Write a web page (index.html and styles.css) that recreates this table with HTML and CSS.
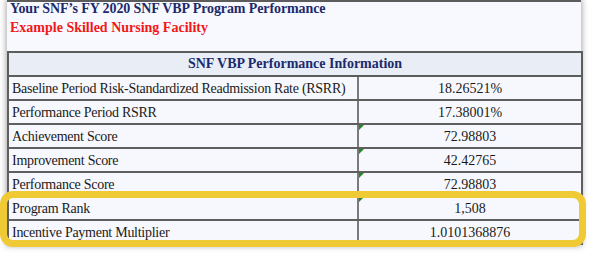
FILE: index.html
```html
<!DOCTYPE html>
<html>
<head>
<meta charset="utf-8">
<link rel="stylesheet" href="styles.css">
</head>
<body>
<div class="shot">
  <div class="top">
    <div class="title">Your SNF’s FY 2020 SNF VBP Program Performance</div>
    <div class="facility">Example Skilled Nursing Facility</div>
  </div>
  <table class="perf">
    <colgroup>
      <col class="c-label">
      <col class="c-val">
    </colgroup>
    <thead>
      <tr><th colspan="2">SNF VBP Performance Information</th></tr>
    </thead>
    <tbody>
      <tr><td class="label">Baseline Period Risk-Standardized Readmission Rate (RSRR)</td><td class="val">18.26521%</td></tr>
      <tr><td class="label">Performance Period RSRR</td><td class="val">17.38001%</td></tr>
      <tr><td class="label">Achievement Score</td><td class="val flag">72.98803</td></tr>
      <tr><td class="label">Improvement Score</td><td class="val flag">42.42765</td></tr>
      <tr><td class="label">Performance Score</td><td class="val flag">72.98803</td></tr>
      <tr><td class="label">Program Rank</td><td class="val flag">1,508</td></tr>
      <tr><td class="label">Incentive Payment Multiplier</td><td class="val">1.0101368876</td></tr>
    </tbody>
  </table>
  <div class="highlight"></div>
</div>
</body>
</html>
```
FILE: styles.css
```css
html, body {
  margin: 0;
  padding: 0;
  background: #ffffff;
}
body {
  width: 589px;
  height: 253px;
  overflow: hidden;
  font-family: "Liberation Serif", "Times New Roman", serif;
}
.shot {
  position: relative;
  margin-left: 7px;
  width: 574px;
  background: #f8f9fe;
  box-shadow: 0 0 6px 1px rgba(0, 0, 0, 0.35);
}
.top {
  border-top: 2px solid #5c5c5c;
  padding-left: 3px;
  box-sizing: border-box;
  height: 51px;
}
.title {
  color: #1c2a6b;
  font-weight: bold;
  font-size: 14px;
  line-height: 16px;
  margin-top: -1px;
  letter-spacing: -0.1px;
}
.facility {
  color: #f01818;
  font-weight: bold;
  font-size: 14px;
  line-height: 16px;
  margin-top: 3px;
}
.perf {
  width: 574px;
  border-collapse: collapse;
  table-layout: fixed;
  font-size: 14px;
}
.c-label {
  width: 350px;
}
.c-val {
  width: 224px;
}
.perf th {
  background: #e9edf6;
  color: #1c2a6b;
  font-weight: bold;
  height: 22px;
  padding: 0;
  border: 2px solid #5c5c5c;
  text-align: center;
  line-height: 22px;
}
.perf td {
  height: 21px;
  padding: 1px 0 0;
  line-height: 21px;
  color: #1a1a1a;
  background: #f7f8fd;
  border-top: 2px solid #5f5f5f;
  border-bottom: 2px solid #5f5f5f;
  white-space: nowrap;
}
.perf td.label {
  padding-left: 3px;
  border-left: 2px solid #5f5f5f;
  border-right: 2px solid #7a7a7a;
  letter-spacing: -0.27px;
}
.perf td.val {
  text-align: center;
  border-right: 2px solid #5f5f5f;
  position: relative;
}
.perf td.flag::before {
  content: "";
  position: absolute;
  left: 0;
  top: 0;
  width: 0;
  height: 0;
  border-top: 5px solid #1e8c1e;
  border-right: 5px solid transparent;
}
.highlight {
  position: absolute;
  left: -7px;
  top: 191px;
  width: 586px;
  height: 56px;
  box-sizing: border-box;
  border: 7px solid #efca34;
  border-radius: 13px;
}
```
